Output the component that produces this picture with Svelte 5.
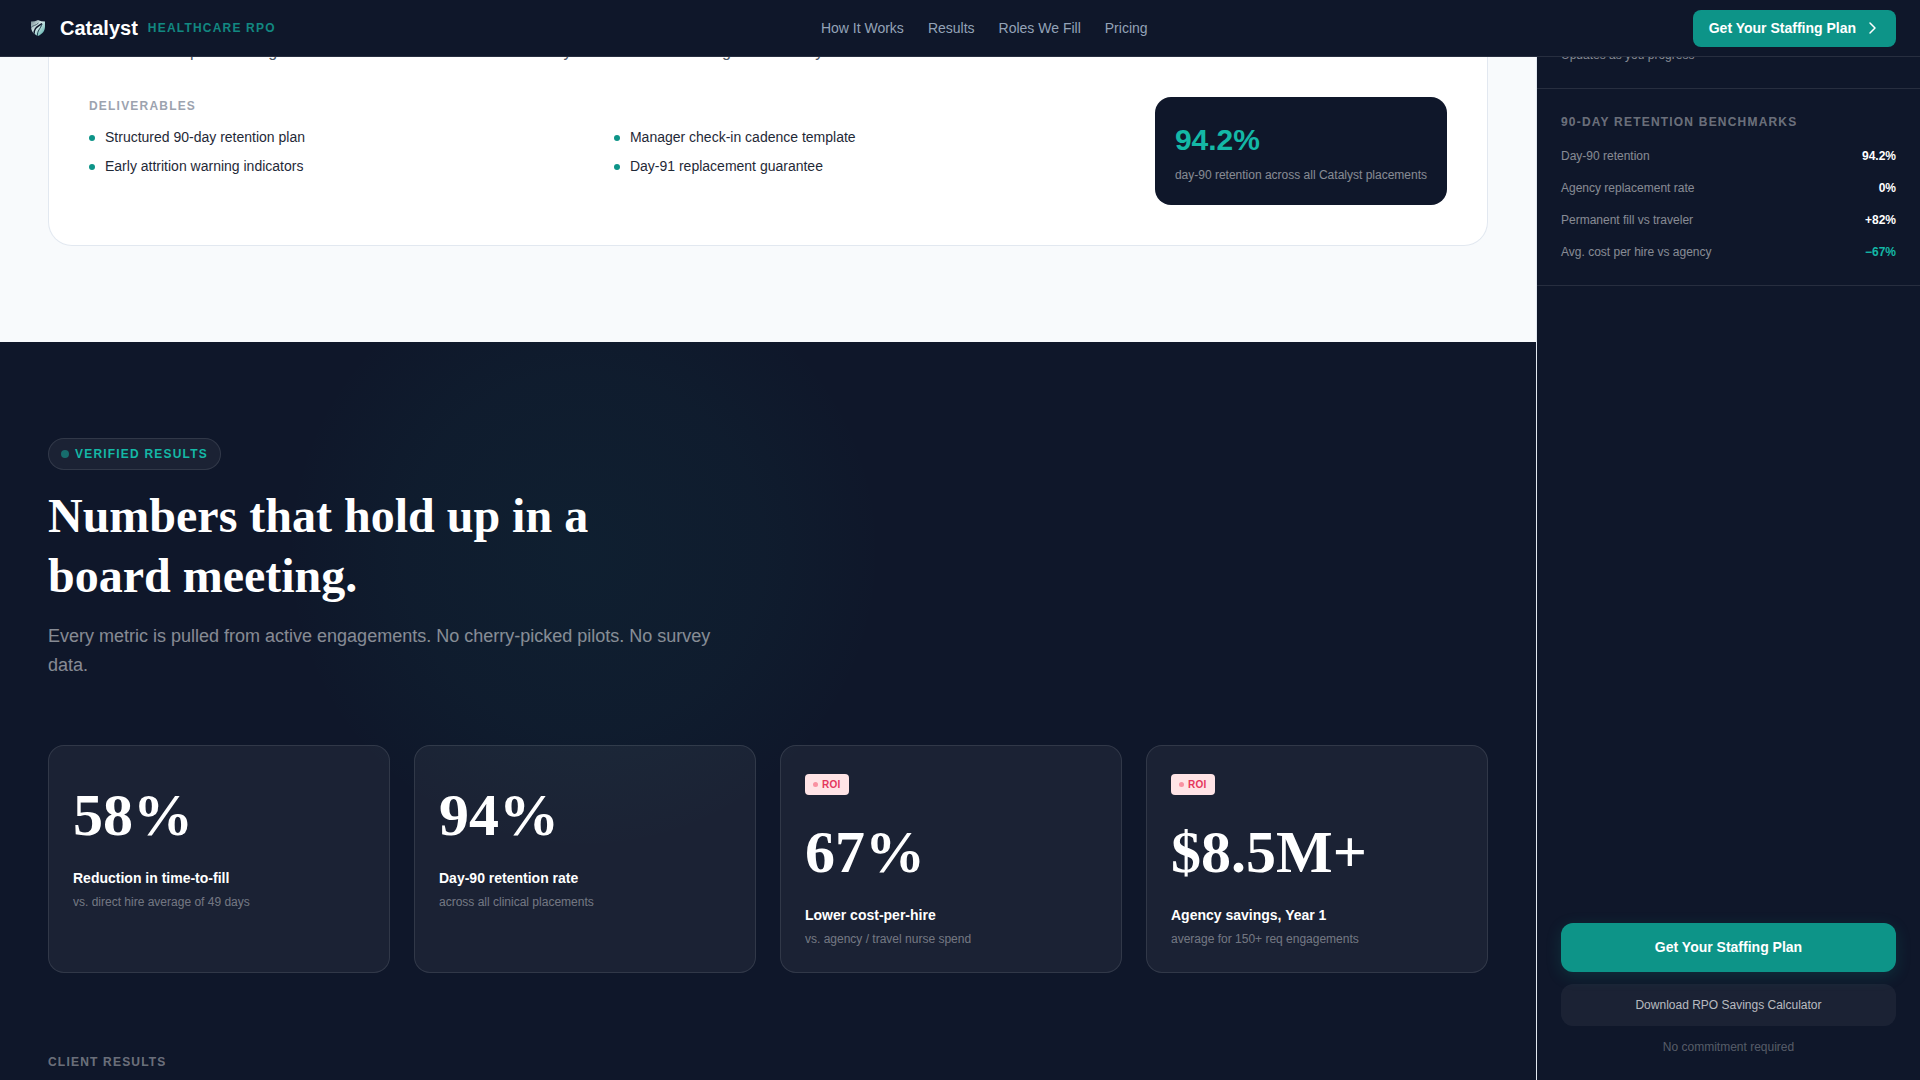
<script lang="ts">
  type Stat = { value: string; label: string; note: string; roi?: boolean };

  const navLinks = [
    { label: 'How It Works', href: '#how-it-works' },
    { label: 'Results', href: '#results' },
    { label: 'Roles We Fill', href: '#roles' },
    { label: 'Pricing', href: '#pricing' },
  ];

  const deliverables = [
    'Structured 90-day retention plan',
    'Manager check-in cadence template',
    'Early attrition warning indicators',
    'Day-91 replacement guarantee',
  ];

  const stats: Stat[] = [
    { value: '58%', label: 'Reduction in time-to-fill', note: 'vs. direct hire average of 49 days' },
    { value: '94%', label: 'Day-90 retention rate', note: 'across all clinical placements' },
    { value: '67%', label: 'Lower cost-per-hire', note: 'vs. agency / travel nurse spend', roi: true },
    { value: '$8.5M+', label: 'Agency savings, Year 1', note: 'average for 150+ req engagements', roi: true },
  ];

  const benchmarks = [
    { label: 'Day-90 retention', value: '94.2%' },
    { label: 'Agency replacement rate', value: '0%' },
    { label: 'Permanent fill vs traveler', value: '+82%' },
    { label: 'Avg. cost per hire vs agency', value: '−67%', accent: true },
  ];
</script>

<header class="topbar">
  <a class="brand" href="#top">
    <svg class="brand-mark" viewBox="0 0 28 28" aria-hidden="true">
      <defs>
        <linearGradient id="shield" x1="0" y1="0" x2="1" y2="1">
          <stop offset="0" stop-color="#5f747c" />
          <stop offset="0.45" stop-color="#d6eaea" />
          <stop offset="1" stop-color="#2f9c96" />
        </linearGradient>
        <clipPath id="shield-shape">
          <path d="M7 7.5Q11 7.5 14 6Q17 7.5 21 7.5V12.5C21 17 18.5 20 14 22C9.500 20 7 17 7 12.500Z" />
        </clipPath>
      </defs>
      <g clip-path="url(#shield-shape)">
        <rect x="6" y="5" width="16" height="18" fill="url(#shield)" />
        <path d="M10 20C10 13.500 13.500 13 18 9.500" fill="none" stroke="#0f172a" stroke-width="1.500" />
        <path d="M13.500 22C13 16.500 16.500 15 18 10" fill="none" stroke="#1c3a4a" stroke-width="1" />
        <path d="M6.500 14C9 11 11.500 12 14.500 9" fill="none" stroke="#4b606c" stroke-width="1" />
      </g>
    </svg>
    <span class="brand-name">Catalyst</span>
    <span class="brand-tag">HEALTHCARE RPO</span>
  </a>

  <nav class="nav" aria-label="Main">
    {#each navLinks as link}
      <a href={link.href}>{link.label}</a>
    {/each}
  </nav>

  <button class="btn-plan" type="button">
    Get Your Staffing Plan
    <svg width="16" height="16" viewBox="0 0 16 16" fill="none" stroke="currentColor" stroke-width="1.500" stroke-linecap="round" stroke-linejoin="round" aria-hidden="true">
      <path d="M6 3l5 5-5 5" />
    </svg>
  </button>
</header>

<div class="layout">
  <main>
    <section class="process">
      <article class="step">
        <p class="step-text">We track new placement goals and milestones with the team weekly so new risks are caught on the day</p>
        <div class="step-body">
          <div>
            <h3 class="eyebrow">DELIVERABLES</h3>
            <ul class="deliverables">
              {#each deliverables as item}
                <li>{item}</li>
              {/each}
            </ul>
          </div>
          <div class="proof">
            <div class="proof-value">94.2%</div>
            <div class="proof-label">day-90 retention across all Catalyst placements</div>
          </div>
        </div>
      </article>
    </section>

    <section class="results" id="results">
      <span class="pill"><span class="pill-dot"></span>VERIFIED RESULTS</span>
      <h2>Numbers that hold up in a board meeting.</h2>
      <p class="lead">Every metric is pulled from active engagements. No cherry-picked pilots. No survey data.</p>

      <div class="stats">
        {#each stats as stat}
          <div class="stat">
            {#if stat.roi}
              <span class="roi"><span class="roi-dot"></span>ROI</span>
            {/if}
            <div class="stat-value">{stat.value}</div>
            <div class="stat-label">{stat.label}</div>
            <div class="stat-note">{stat.note}</div>
          </div>
        {/each}
      </div>

      <h3 class="eyebrow client">CLIENT RESULTS</h3>
    </section>
  </main>

  <aside class="sidebar">
    <div class="progress-note">Updates as you progress</div>

    <section class="benchmarks">
      <h3 class="eyebrow">90-DAY RETENTION BENCHMARKS</h3>
      <dl>
        {#each benchmarks as row}
          <div class="bench-row">
            <dt>{row.label}</dt>
            <dd class:accent={row.accent}>{row.value}</dd>
          </div>
        {/each}
      </dl>
    </section>

    <div class="cta">
      <button class="cta-primary" type="button">Get Your Staffing Plan</button>
      <button class="cta-secondary" type="button">Download RPO Savings Calculator</button>
      <p>No commitment required</p>
    </div>
  </aside>
</div>

<style>
  :global(body) {
    margin: 0;
    background: #0f172a;
    font-family: "Liberation Sans", Arial, sans-serif;
  }

  * { box-sizing: border-box; }
  h2, h3, p, ul, dl, dd { margin: 0; padding: 0; }
  button { font-family: inherit; border: none; cursor: pointer; }
  a { color: inherit; text-decoration: none; }

  /* top bar */
  .topbar {
    position: fixed;
    top: 0;
    left: 0;
    right: 0;
    z-index: 10;
    height: 57px;
    padding: 0 24px;
    display: flex;
    align-items: center;
    justify-content: space-between;
    background: #0f172a;
    border-bottom: 1px solid rgba(255, 255, 255, 0.1);
  }

  .brand { display: flex; align-items: center; gap: 8px; }
  .brand-mark { width: 28px; height: 28px; }
  .brand-name { font-size: 20px; line-height: 28px; font-weight: 700; color: #fff; }
  .brand-tag { font-size: 12px; line-height: 18px; font-weight: 700; letter-spacing: 0.1em; color: #14b8a6; opacity: 0.7; padding-left: 2px; }

  .nav { display: flex; gap: 24px; font-size: 14px; line-height: 21px; color: #94a3b8; }

  .btn-plan {
    display: flex;
    align-items: center;
    gap: 8px;
    padding: 8px 16px;
    border-radius: 8px;
    background: #0d9488;
    color: #fff;
    font-size: 14px;
    line-height: 21px;
    font-weight: 700;
  }

  .layout {
    display: grid;
    grid-template-columns: minmax(0, 1fr) 384px;
    min-height: 100vh;
  }

  main { display: flex; flex-direction: column; }

  .eyebrow {
    font-size: 12px;
    line-height: 18px;
    font-weight: 700;
    letter-spacing: 0.1em;
    color: #9ca3af;
  }

  /* process step */
  .process { background: #f8fafc; padding: 0 48px 96px; }

  .step {
    padding: 39px 40px 40px;
    background: #fff;
    border: 1px solid #e2e8f0;
    border-top: none;
    border-radius: 0 0 24px 24px;
  }

  .step-text { font-size: 16px; line-height: 26px; color: #4b5563; margin-bottom: 32px; }

  .step-body { display: grid; grid-template-columns: minmax(0, 1fr) auto; gap: 24px; }

  .deliverables {
    list-style: none;
    display: grid;
    grid-template-columns: 1fr 1fr;
    gap: 8px;
    margin-top: 12px;
    font-size: 14px;
    line-height: 21px;
    color: #1f2937;
  }

  .deliverables li { display: flex; align-items: center; gap: 10px; }
  .deliverables li::before { content: ""; width: 6px; height: 6px; border-radius: 50%; background: #0d9488; }

  .proof { padding: 20px; border-radius: 16px; background: #0f172a; }
  .proof-value { font-size: 30px; line-height: 45px; font-weight: 700; color: #14b8a6; }
  .proof-label { margin-top: 4px; font-size: 12px; line-height: 19px; color: rgba(255, 255, 255, 0.5); }

  /* verified results */
  .results {
    flex: 1;
    padding: 96px 48px 0;
    background: radial-gradient(circle 300px at 38% 210px, rgba(20, 184, 166, 0.05), rgba(20, 184, 166, 0.03) 60%, transparent) #0f172a;
  }

  .pill {
    display: flex;
    width: fit-content;
    align-items: center;
    gap: 6px;
    padding: 6px 12px;
    border: 1px solid rgba(255, 255, 255, 0.1);
    border-radius: 16px;
    background: rgba(255, 255, 255, 0.05);
    font-size: 12px;
    line-height: 18px;
    font-weight: 700;
    letter-spacing: 0.1em;
    color: #14b8a6;
  }

  .pill-dot { width: 8px; height: 8px; border-radius: 50%; background: #14b8a6; opacity: 0.5; }

  h2 {
    max-width: 672px;
    margin-top: 16px;
    font-family: "Liberation Serif", "Times New Roman", serif;
    font-size: 48px;
    line-height: 60px;
    font-weight: 700;
    color: #fff;
  }

  .lead { max-width: 672px; margin-top: 16px; font-size: 18px; line-height: 29px; color: rgba(255, 255, 255, 0.5); }

  .stats { display: grid; grid-template-columns: repeat(4, 1fr); gap: 24px; margin-top: 65px; }

  .stat {
    padding: 24px;
    border: 1px solid rgba(255, 255, 255, 0.1);
    border-radius: 16px;
    background: rgba(255, 255, 255, 0.05);
  }

  .roi {
    display: flex;
    width: fit-content;
    align-items: center;
    gap: 4px;
    margin: 4px 0 12px;
    padding: 3px 8px;
    border-radius: 4px;
    background: #ffe4e6;
    font-size: 10px;
    line-height: 15px;
    font-weight: 700;
    letter-spacing: 0.03em;
    color: #e5375d;
  }

  .roi-dot { width: 5px; height: 5px; border-radius: 50%; background: #f43f5e; opacity: 0.5; }

  .stat-value {
    font-family: "Liberation Serif", "Times New Roman", serif;
    font-size: 60px;
    line-height: 90px;
    font-weight: 700;
    color: #fff;
  }

  .stat-label { margin-top: 8px; font-size: 14px; line-height: 21px; font-weight: 700; color: #fff; }
  .stat-note { margin-top: 4px; font-size: 12px; line-height: 18px; color: rgba(255, 255, 255, 0.4); }

  .client { margin-top: 80px; color: rgba(255, 255, 255, 0.4); }

  /* sidebar */
  .sidebar {
    position: sticky;
    top: 0;
    height: 100vh;
    display: flex;
    flex-direction: column;
    background: #0f172a;
    border-left: 1px solid #e2e8f0;
  }

  .progress-note {
    padding: 46px 24px 24px;
    font-size: 12px;
    line-height: 18px;
    color: rgba(255, 255, 255, 0.5);
    border-bottom: 1px solid rgba(255, 255, 255, 0.1);
  }

  .benchmarks { padding: 24px; border-bottom: 1px solid rgba(255, 255, 255, 0.1); }
  .benchmarks .eyebrow { color: rgba(255, 255, 255, 0.4); }
  .benchmarks dl { display: flex; flex-direction: column; gap: 14px; margin-top: 16px; font-size: 12px; line-height: 18px; }

  .bench-row { display: flex; justify-content: space-between; }
  dt { color: rgba(255, 255, 255, 0.5); }
  dd { font-weight: 700; color: #fff; }
  dd.accent { color: #14b8a6; }

  .cta { margin-top: auto; padding: 24px; display: flex; flex-direction: column; gap: 12px; text-align: center; }

  .cta-primary {
    padding: 14px;
    border-radius: 12px;
    background: #0d9488;
    color: #fff;
    font-size: 14px;
    line-height: 21px;
    font-weight: 700;
    box-shadow: 0 4px 16px rgba(13, 148, 136, 0.2);
  }

  .cta-secondary {
    padding: 12px;
    border-radius: 12px;
    background: rgba(255, 255, 255, 0.05);
    color: rgba(255, 255, 255, 0.7);
    font-size: 12px;
    line-height: 18px;
  }

  .cta p { font-size: 12px; line-height: 18px; color: rgba(255, 255, 255, 0.3); }
</style>
